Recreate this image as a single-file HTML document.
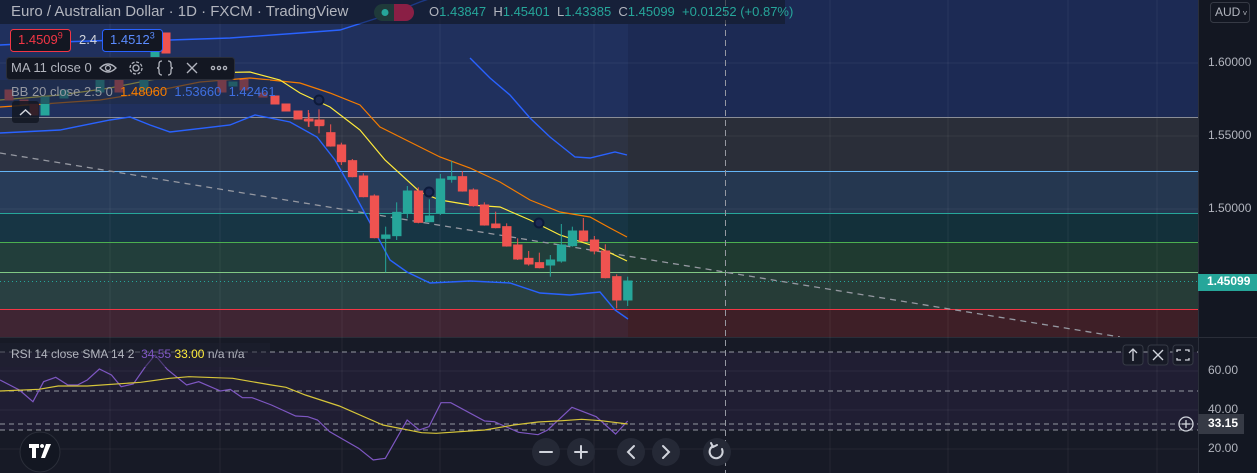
<!DOCTYPE html>
<html><head><meta charset="utf-8"><style>
*{margin:0;padding:0;box-sizing:border-box}
html,body{width:1257px;height:473px;overflow:hidden}
body{background:#131722;font-family:"Liberation Sans",sans-serif;position:relative}
.abs{position:absolute}
.t{position:absolute;white-space:nowrap;line-height:1.15}
sup{line-height:0}
</style></head><body>
<svg class="abs" style="left:0;top:0;display:block" width="1257" height="473" xmlns="http://www.w3.org/2000/svg">
<rect x="0" y="0" width="1198" height="117" fill="#1c2a54"/>
<rect x="0" y="117" width="1198" height="54" fill="#2a2e39"/>
<rect x="0" y="171" width="1198" height="42" fill="#253750"/>
<rect x="0" y="213" width="1198" height="29" fill="#13303a"/>
<rect x="0" y="242" width="1198" height="30" fill="#1f3a30"/>
<rect x="0" y="272" width="1198" height="37" fill="#263c37"/>
<rect x="0" y="309" width="1198" height="28" fill="#3e1f27"/>
<rect x="0" y="24" width="628" height="313" fill="#5a7ad0" opacity="0.07"/>
<g stroke="#ffffff" stroke-opacity="0.06" stroke-width="1">
<line x1="110" y1="0" x2="110" y2="473"/><line x1="220" y1="0" x2="220" y2="473"/><line x1="342" y1="0" x2="342" y2="473"/><line x1="440" y1="0" x2="440" y2="473"/><line x1="594" y1="0" x2="594" y2="473"/><line x1="830" y1="0" x2="830" y2="473"/><line x1="948" y1="0" x2="948" y2="473"/><line x1="1068" y1="0" x2="1068" y2="473"/><line x1="1157" y1="0" x2="1157" y2="473"/>
<line x1="0" y1="63" x2="1198" y2="63"/><line x1="0" y1="136" x2="1198" y2="136"/><line x1="0" y1="209" x2="1198" y2="209"/>
</g>
<line x1="0" y1="117.5" x2="1198" y2="117.5" stroke="#8a8d96"/>
<line x1="0" y1="171.5" x2="1198" y2="171.5" stroke="#64b5f6"/>
<line x1="0" y1="213.5" x2="1198" y2="213.5" stroke="#26a69a"/>
<line x1="0" y1="242.5" x2="1198" y2="242.5" stroke="#4caf50"/>
<line x1="0" y1="272.5" x2="1198" y2="272.5" stroke="#81c784"/>
<line x1="0" y1="309.5" x2="1198" y2="309.5" stroke="#f23645"/>
<line x1="0" y1="281.5" x2="1198" y2="281.5" stroke="#26a69a" stroke-dasharray="1 3"/>
<line x1="0" y1="153" x2="1120" y2="337" stroke="#9598a1" stroke-width="1.3" stroke-dasharray="6 5"/>
<polyline fill="none" stroke="#2962ff" stroke-width="1.4" points="0,45 60,42 120,40 170,40 230,38 300,33 340,30 390,14 420,2 440,-5"/>
<polyline fill="none" stroke="#2962ff" stroke-width="1.4" points="470,58 490,78 510,95 530,118 550,137 575,157 590,158 615,152 627,155"/>
<polyline fill="none" stroke="#2962ff" stroke-width="1.4" points="0,133 60,130 110,120 130,117 150,125 170,132 230,125 255,115 290,122 317,137 335,160 355,195 375,232 390,260 407,272 430,283 470,281 510,283 540,293 570,295 600,292 615,310 628,319"/>
<polyline fill="none" stroke="#f57c00" stroke-width="1.2" points="0,107 100,100 150,92 200,82 250,78 300,83 330,93 360,105 380,127 410,142 440,157 470,168 500,182 530,200 560,212 590,217 610,228 627,237"/>
<polyline fill="none" stroke="#ffeb3b" stroke-width="1.2" points="0,100 60,95 110,88 150,80 200,73 250,72 280,80 300,93 330,107 360,130 385,160 420,192 440,200 470,205 500,207 530,220 560,235 600,248 627,261"/>
<g transform="translate(300,60) scale(0.33333)">
<g stroke-width="3">
<g fill="#ef5350" stroke="#ef5350">
<line x1="25" y1="150" x2="25" y2="200"/><rect x="13" y="178" width="25" height="4"/>
<line x1="57" y1="148" x2="57" y2="220"/><rect x="45" y="180" width="25" height="17"/>
<line x1="92" y1="193" x2="92" y2="260"/><rect x="80" y="218" width="25" height="40"/>
<line x1="124" y1="248" x2="124" y2="315"/><rect x="112" y="255" width="25" height="50"/>
<line x1="157" y1="297" x2="157" y2="352"/><rect x="145" y="302" width="25" height="48"/>
<line x1="190" y1="340" x2="190" y2="412"/><rect x="178" y="348" width="25" height="62"/>
<line x1="223" y1="403" x2="223" y2="535"/><rect x="211" y="408" width="25" height="125"/>
<line x1="355" y1="382" x2="355" y2="490"/><rect x="343" y="393" width="25" height="94"/>
<line x1="487" y1="333" x2="487" y2="395"/><rect x="475" y="350" width="25" height="43"/>
<line x1="520" y1="385" x2="520" y2="440"/><rect x="508" y="390" width="25" height="47"/>
<line x1="553" y1="427" x2="553" y2="497"/><rect x="541" y="435" width="25" height="60"/>
<line x1="587" y1="455" x2="587" y2="505"/><rect x="575" y="492" width="25" height="11"/>
<line x1="620" y1="490" x2="620" y2="560"/><rect x="608" y="500" width="25" height="58"/>
<line x1="653" y1="535" x2="653" y2="600"/><rect x="641" y="555" width="25" height="42"/>
<line x1="686" y1="573" x2="686" y2="617"/><rect x="674" y="595" width="25" height="17"/>
<line x1="718" y1="578" x2="718" y2="625"/><rect x="706" y="608" width="25" height="15"/>
<line x1="850" y1="474" x2="850" y2="545"/><rect x="838" y="513" width="25" height="30"/>
<line x1="883" y1="528" x2="883" y2="583"/><rect x="871" y="540" width="25" height="33"/>
<line x1="916" y1="553" x2="916" y2="655"/><rect x="904" y="573" width="25" height="80"/>
<line x1="950" y1="643" x2="950" y2="745"/><rect x="938" y="650" width="25" height="70"/>
</g>
<g fill="#26a69a" stroke="#26a69a">
<line x1="257" y1="500" x2="257" y2="637"/><rect x="245" y="525" width="25" height="10"/>
<line x1="290" y1="427" x2="290" y2="540"/><rect x="278" y="457" width="25" height="70"/>
<line x1="322" y1="378" x2="322" y2="475"/><rect x="310" y="393" width="25" height="67"/>
<line x1="388" y1="418" x2="388" y2="487"/><rect x="376" y="468" width="25" height="17"/>
<line x1="421" y1="342" x2="421" y2="465"/><rect x="409" y="357" width="25" height="103"/>
<line x1="455" y1="303" x2="455" y2="368"/><rect x="443" y="350" width="25" height="8"/>
<line x1="751" y1="585" x2="751" y2="650"/><rect x="739" y="600" width="25" height="15"/>
<line x1="784" y1="492" x2="784" y2="608"/><rect x="772" y="555" width="25" height="48"/>
<line x1="817" y1="500" x2="817" y2="560"/><rect x="805" y="513" width="25" height="44"/>
<line x1="983" y1="650" x2="983" y2="738"/><rect x="971" y="663" width="25" height="57"/>
</g></g></g>
<g stroke-width="1">
<g fill="#ef5350" stroke="#ef5350">
<rect x="5" y="90" width="8" height="10"/><rect x="20" y="100" width="8" height="4"/><rect x="30" y="104" width="8" height="11"/>
<rect x="115" y="80" width="8" height="12"/><rect x="162" y="33" width="8" height="20"/><rect x="218" y="80" width="8" height="12"/><rect x="240" y="80" width="8" height="10"/>
<rect x="259" y="93" width="8" height="4"/><rect x="271" y="96" width="8" height="8"/><rect x="282" y="104" width="8" height="7"/><rect x="294" y="111" width="8" height="8"/><line x1="309" y1="113" x2="309" y2="127"/><rect x="305" y="119" width="8" height="2"/><rect x="316" y="120" width="8" height="5"/>
</g>
<g fill="#26a69a" stroke="#26a69a">
<rect x="41" y="97" width="8" height="18"/><rect x="60" y="90" width="8" height="8"/><rect x="96" y="80" width="8" height="12"/><rect x="140" y="80" width="8" height="10"/><rect x="151" y="50" width="8" height="8"/><rect x="229" y="82" width="8" height="4"/>
</g></g>
<g fill="#1c2a54" stroke="#0d1a3a" stroke-width="2"><circle cx="319" cy="100" r="4.5"/><circle cx="429" cy="192" r="4.5"/><circle cx="539" cy="223" r="4.5"/></g>
<rect x="0" y="337" width="1198" height="136" fill="#171a26"/>
<rect x="0" y="352" width="1198" height="78" fill="#201e33"/>
<line x1="0" y1="337.5" x2="1257" y2="337.5" stroke="#2a2e39"/>
<g stroke="#ffffff" stroke-opacity="0.06"><line x1="0" y1="371" x2="1198" y2="371"/><line x1="0" y1="410" x2="1198" y2="410"/><line x1="0" y1="449" x2="1198" y2="449"/>
<line x1="110" y1="337" x2="110" y2="473"/><line x1="220" y1="337" x2="220" y2="473"/><line x1="342" y1="337" x2="342" y2="473"/><line x1="440" y1="337" x2="440" y2="473"/><line x1="594" y1="337" x2="594" y2="473"/><line x1="830" y1="337" x2="830" y2="473"/><line x1="948" y1="337" x2="948" y2="473"/><line x1="1068" y1="337" x2="1068" y2="473"/><line x1="1157" y1="337" x2="1157" y2="473"/></g>
<g stroke="#9598a1" stroke-dasharray="5 4"><line x1="0" y1="352" x2="1198" y2="352"/><line x1="0" y1="391" x2="1198" y2="391"/><line x1="0" y1="424" x2="1198" y2="424"/><line x1="0" y1="430" x2="1198" y2="430"/></g>
<g fill="none" stroke-width="1.2">
<polyline transform="translate(0,330) scale(0.4847,0.33333)" vector-effect="non-scaling-stroke" stroke="#7e57c2" points="0,150 40,180 68,215 90,155 115,142 140,165 160,165 180,150 205,117 230,135 250,170 275,162 300,110 320,75 345,118 385,165 410,155 455,183 475,178 500,203 520,203 560,225 610,258 635,260 655,270 680,305 740,355 770,390 795,385 840,270 865,300 885,290 910,218 930,218 1000,273 1020,275 1070,307 1110,314 1130,300 1180,232 1230,260 1270,312 1295,273"/>
<polyline transform="translate(0,330) scale(0.4847,0.33333)" vector-effect="non-scaling-stroke" stroke="#d6c53a" points="0,183 80,178 120,168 180,168 290,157 350,145 390,140 480,145 560,165 590,172 630,195 700,228 790,285 870,308 900,310 1000,300 1060,285 1110,276 1160,272 1200,268 1240,272 1295,282"/>
</g>
<line x1="725.5" y1="0" x2="725.5" y2="473" stroke="#9598a1" stroke-dasharray="6 4"/>
<line x1="1198.5" y1="0" x2="1198.5" y2="473" stroke="#2a2e39"/>
<circle cx="40" cy="452" r="20" fill="#131722" stroke="#2a2e39"/>
<g fill="#252936"><circle cx="546" cy="452" r="14"/><circle cx="581" cy="452" r="14"/><circle cx="631" cy="452" r="14"/><circle cx="666" cy="452" r="14"/><circle cx="717" cy="452" r="14"/></g>
<g stroke="#d1d4dc" stroke-width="2" fill="none" stroke-linecap="round">
<line x1="540" y1="452" x2="552" y2="452"/><line x1="575" y1="452" x2="587" y2="452"/><line x1="581" y1="446" x2="581" y2="458"/>
<polyline points="634,446 628,452 634,458"/><polyline points="663,446 669,452 663,458"/>
<path d="M713 446 A6.5 6.5 0 1 0 722 449"/><polyline points="711,443 713,447 717,445"/>
</g>
<path d="M29 444 h10 v4 h-3 v10 h-4 v-10 h-3z M42 448 a2 2 0 1 1 0.1 0z M46 444 h5 l-6 14 h-4z" fill="#fff"/>
<g fill="#171a26" stroke="#363a45"><rect x="1123" y="345" width="20" height="20" rx="3"/><rect x="1148" y="345" width="20" height="20" rx="3"/><rect x="1173" y="345" width="20" height="20" rx="3"/></g>
<g stroke="#d1d4dc" stroke-width="1.3" fill="none"><line x1="1133" y1="349" x2="1133" y2="361"/><polyline points="1129,353 1133,349 1137,353"/><line x1="1153" y1="350" x2="1163" y2="360"/><line x1="1163" y1="350" x2="1153" y2="360"/><path d="M1177 352 v-2 h4 M1185 350 h4 v2 M1189 358 v2 h-4 M1181 360 h-4 v-2"/></g>
<circle cx="1186" cy="424" r="7" fill="none" stroke="#d1d4dc" stroke-width="1.3"/><g stroke="#d1d4dc" stroke-width="1.3"><line x1="1182" y1="424" x2="1190" y2="424"/><line x1="1186" y1="420" x2="1186" y2="428"/></g>
<rect x="0" y="0" width="785" height="24" fill="#131722" opacity="0.55"/>
<rect x="374" y="4" width="40" height="17" rx="8.5" fill="#1f3a3a"/><rect x="394" y="4" width="20" height="17" rx="8.5" fill="#8a1f45"/><rect x="394" y="4" width="8" height="17" fill="#8a1f45"/>
<circle cx="385" cy="12.5" r="3.5" fill="#26a69a"/>
<rect x="10.5" y="29.5" width="60" height="22" rx="3" fill="#131722" stroke="#f23645"/>
<rect x="102.5" y="29.5" width="60" height="22" rx="3" fill="#131722" stroke="#2962ff"/>
<rect x="6.5" y="57.5" width="228" height="22" rx="3" fill="#131722" stroke="#2a2e39"/>
<rect x="0" y="80" width="270" height="24" fill="#1f2b45" opacity="0.6"/>
<rect x="12" y="101" width="27" height="22" rx="3" fill="#131722" opacity="0.85"/>
<polyline points="20,115 25.5,110 31,115" fill="none" stroke="#d1d4dc" stroke-width="1.5"/>
<rect x="0" y="343" width="270" height="24" fill="#1e1f30" opacity="0.5"/>
<g stroke="#b2b5be" stroke-width="1.3" fill="none">
<path d="M100 68 q8 -8 16 0 q-8 8 -16 0z"/><circle cx="108" cy="68" r="2.5"/>
<circle cx="136" cy="68" r="3"/><circle cx="136" cy="68" r="6" stroke-dasharray="3 1.7"/>
<path d="M162 61 q-3 0 -3 3 v2 q0 2 -2 2 q2 0 2 2 v2 q0 3 3 3 M168 61 q3 0 3 3 v2 q0 2 2 2 q-2 0 -2 2 v2 q0 3 -3 3"/>
<line x1="187" y1="63" x2="197" y2="73"/><line x1="197" y1="63" x2="187" y2="73"/>
<circle cx="213" cy="68" r="1.6"/><circle cx="219" cy="68" r="1.6"/><circle cx="225" cy="68" r="1.6"/>
</g>
<rect x="1198" y="274" width="59" height="17" fill="#26a69a"/>
<rect x="1198" y="414" width="46" height="20" fill="#363a45"/>
<rect x="1210.5" y="2.5" width="39" height="20" rx="3" fill="#131722" stroke="#363a45"/>
</svg>
<div class="t" style="left:11px;top:3px;font-size:15px;color:#b2b5be">Euro / Australian Dollar · 1D · FXCM · TradingView</div>
<div class="t" style="left:429px;top:5px;font-size:13px;color:#26a69a"><span style="color:#b2b5be">O</span>1.43847 &nbsp;<span style="color:#b2b5be">H</span>1.45401 &nbsp;<span style="color:#b2b5be">L</span>1.43385 &nbsp;<span style="color:#b2b5be">C</span>1.45099 &nbsp;+0.01252 (+0.87%)</div>
<div class="t" style="left:18px;top:33px;font-size:13px;color:#f23645">1.4509<sup style="font-size:9px">9</sup></div>
<div class="t" style="left:79px;top:33px;font-size:13px;color:#d1d4dc">2.4</div>
<div class="t" style="left:110px;top:33px;font-size:13px;color:#5b8cff">1.4512<sup style="font-size:9px">3</sup></div>
<div class="t" style="left:11px;top:61px;font-size:13px;color:#b2b5be">MA 11 close 0</div>
<div class="t" style="left:11px;top:85px;font-size:13px;color:#9598a1">BB 20 close 2.5 0 <span style="color:#f57c00">&nbsp;1.48060</span> <span style="color:#3f6fe0">&nbsp;1.53660 &nbsp;1.42461</span></div>
<div class="t" style="left:11px;top:348px;font-size:12px;color:#b2b5be">RSI 14 close SMA 14 2 &nbsp;<span style="color:#7e57c2">34.55</span> <span style="color:#ffeb3b">33.00</span> n/a n/a</div>
<div class="t" style="left:1215px;top:6px;font-size:12px;color:#b2b5be">AUD<span style="font-size:8px"> ˅</span></div>
<div class="t" style="left:1208px;top:56px;font-size:12px;color:#b2b5be">1.60000</div>
<div class="t" style="left:1208px;top:129px;font-size:12px;color:#b2b5be">1.55000</div>
<div class="t" style="left:1208px;top:202px;font-size:12px;color:#b2b5be">1.50000</div>
<div class="t" style="left:1207px;top:275px;font-size:12px;font-weight:bold;color:#fff">1.45099</div>
<div class="t" style="left:1208px;top:364px;font-size:12px;color:#b2b5be">60.00</div>
<div class="t" style="left:1208px;top:403px;font-size:12px;color:#b2b5be">40.00</div>
<div class="t" style="left:1208px;top:417px;font-size:12px;font-weight:bold;color:#fff">33.15</div>
<div class="t" style="left:1208px;top:442px;font-size:12px;color:#b2b5be">20.00</div>
</body></html>
